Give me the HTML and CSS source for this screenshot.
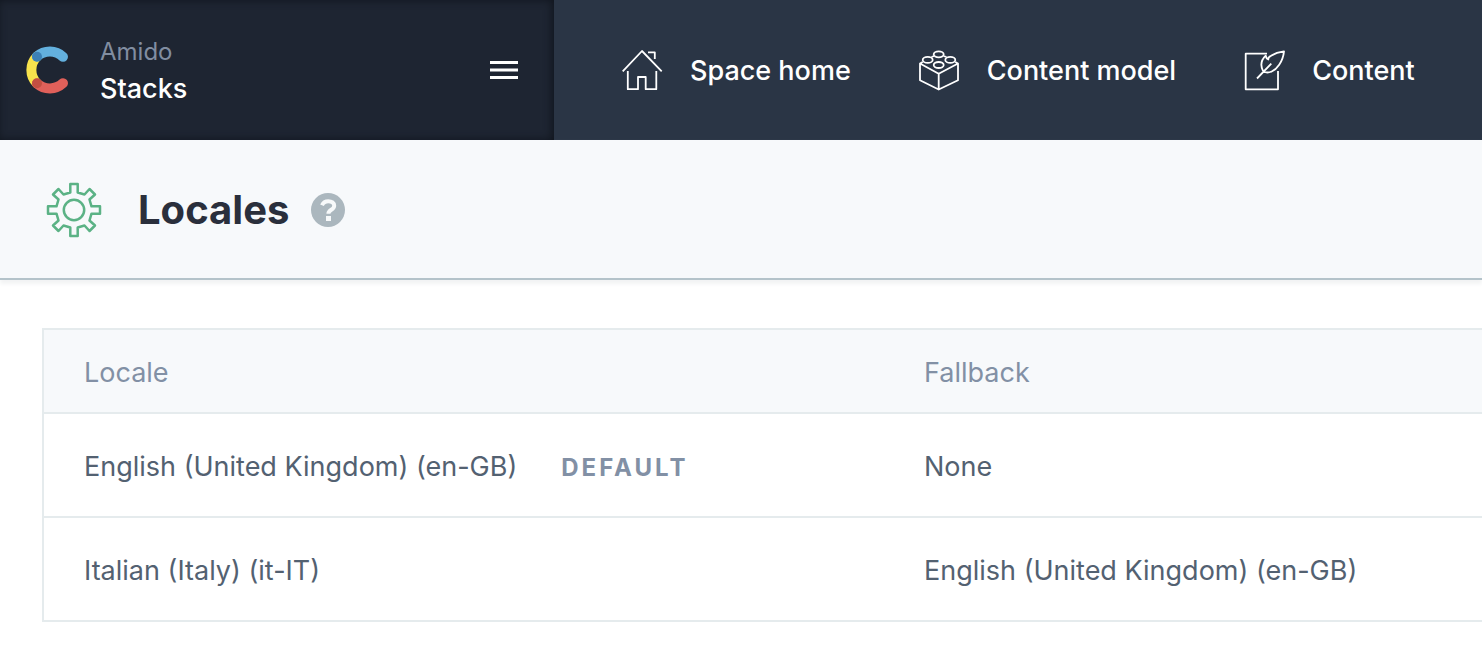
FILE: index.html
```html
<!DOCTYPE html>
<html lang="en">
<head>
<meta charset="utf-8">
<title>Locales</title>
<link rel="stylesheet" href="styles.css">
</head>
<body>
<header class="topbar">
  <div class="space">
    <svg class="logo" viewBox="0 0 44 50" aria-hidden="true" fill="none" stroke-width="10" stroke-linecap="round">
      <path d="M11 11.5A19 19 0 0 0 11 38.5" stroke="#f8e34c"/>
      <path d="M11 11.5A19.2 19.2 0 0 1 37 11.8" stroke="#63b0de"/>
      <path d="M11 38.5A19.2 19.2 0 0 0 37 38.2" stroke="#e0605a"/>
      <circle cx="11" cy="11.7" r="5" fill="#3c80b5"/>
      <circle cx="11" cy="38.3" r="5" fill="#c34f42"/>
    </svg>
    <div class="names">
      <span class="org">Amido</span>
      <span class="space-name">Stacks</span>
    </div>
    <button class="menu" type="button" aria-label="Open menu">
      <svg viewBox="0 0 28 18"><path d="M0 1.5h28M0 9h28M0 16.5h28" stroke="#fff" stroke-width="3"/></svg>
    </button>
  </div>
  <nav class="nav">
    <a class="nav-link" href="#home">
      <svg class="nav-icon" viewBox="0 0 44 44">
        <path d="M2.7 23.3 22 3l19.7 20.3M28 4.3h6.8V11M7.8 23v18.2H18V29h7.7v12.2h10.6V23"/>
      </svg>
      <span>Space home</span>
    </a>
    <a class="nav-link" href="#model">
      <svg class="nav-icon" viewBox="0 0 44 44">
        <path d="m5.700 14-2.700 1.500v16.700l18.700 9.300L41 32.200V15.500L38.300 14M3 15.500l18.700 10.200L41 15.500M21.700 25.700v15.800M14.500 9l2.500-1M29.500 9 26.500 8"/>
        <ellipse cx="21.700" cy="6.300" rx="5" ry="3"/>
        <ellipse cx="10.700" cy="11.900" rx="5" ry="3"/>
        <ellipse cx="33.300" cy="11.900" rx="5" ry="3"/>
        <ellipse cx="21.700" cy="17" rx="5" ry="3"/>
      </svg>
      <span>Content model</span>
    </a>
    <a class="nav-link" href="#content">
      <svg class="nav-icon" viewBox="0 0 44 44">
        <path d="M25 5.700H3.700v35.600H36V23"/>
        <path d="M15 30.500 29.300 15.700M21.300 23.500c-3-5.500-2.100-11.500 2.400-15.800.3 2.200 1 3.200 2.600 3.800-.2-1.700.9-3 2.700-3.700 3.500-2.300 8-3.900 13-4.500-.5 5-2.100 9.500-4.800 13.400-4.200 6.300-10.500 9.600-15.900 6.800Z"/>
      </svg>
      <span>Content</span>
    </a>
  </nav>
</header>
<main>
  <div class="heading">
    <svg class="gear" viewBox="0 0 56 56" aria-hidden="true">
      <path d="M24.300 2h7.400v8.500l6.800 2L43.500 7 49 12.500l-5.500 5 2 6.800H54v7.400h-8.500l-2 6.800 5.500 5-5.500 5.500-5-5.500-6.800 2V54h-7.400v-8.500l-6.800-2-5 5.500L7 43.500l5.500-5-2-6.800H2v-7.400h8.500l2-6.800-5.500-5L12.500 7l5 5.500 6.800-2Z"/>
      <circle cx="28" cy="28" r="10.200"/>
    </svg>
    <h1 class="title">Locales</h1>
    <button class="help" type="button" aria-label="Help">
      <svg viewBox="0 0 34 34">
        <circle cx="17" cy="17" r="17" fill="#abb7be"/>
        <path d="M11 12.300C12.200 9.500 14.500 8.200 17.300 8.200c3.500 0 5.900 1.700 5.900 4.500 0 4.300-5.800 3.800-5.800 8" fill="none" stroke="#f7f9fa" stroke-width="4"/>
        <path d="M15 23h5v5h-5z" fill="#f7f9fa"/>
      </svg>
    </button>
  </div>
  <div class="content">
    <table class="locales">
      <thead>
        <tr><th scope="col" class="locale-col">Locale</th><th scope="col">Fallback</th></tr>
      </thead>
      <tbody>
        <tr><td>English (United Kingdom) (en-GB)<span class="tag">DEFAULT</span></td><td>None</td></tr>
        <tr><td>Italian (Italy) (it-IT)</td><td>English (United Kingdom) (en-GB)</td></tr>
      </tbody>
    </table>
  </div>
</main>
</body>
</html>
```
FILE: styles.css
```css
* { box-sizing: border-box; }
body {
  margin: 0;
  background: #fff;
  color: #536171;
  font-family: Inter, "Liberation Sans", sans-serif;
  font-size: 27px;
  overflow-x: hidden;
}
svg { display: block; }
button { padding: 0; border: 0; background: none; cursor: pointer; }
.topbar { display: flex; height: 140px; background: #2a3545; }
.space {
  display: flex;
  align-items: center;
  flex: 0 0 554px;
  padding: 0 36px 0 26px;
  background: #1e2532;
  box-shadow: inset -2px 0 8px #10151e;
}
.logo { width: 44px; height: 50px; }
.names { display: flex; flex-direction: column; flex: 1; gap: 1px; margin-left: 30px; }
.org { color: #818da1; font-size: 24px; line-height: 36px; }
.space-name { color: #fff; font-size: 27px; font-weight: 500; line-height: 36px; }
.menu svg { width: 28px; height: 18px; }
.nav { display: flex; align-items: center; gap: 66px; padding-left: 66px; }
.nav-link {
  display: flex;
  align-items: center;
  gap: 26px;
  color: #fff;
  font-weight: 500;
  text-decoration: none;
  white-space: nowrap;
}
.nav-icon {
  width: 44px;
  height: 44px;
  fill: none;
  stroke: #fff;
  stroke-width: 1.800;
  stroke-linejoin: round;
}
.heading {
  display: flex;
  align-items: center;
  height: 140px;
  padding: 2px 0 0 46px;
  background: #f7f9fb;
  border-bottom: 2px solid #b4c3ca;
  box-shadow: 0 4px 4px #f2f3f4;
}
.gear { width: 56px; height: 56px; fill: none; stroke: #5bb285; stroke-width: 2.500; stroke-linejoin: round; }
.title { margin: 0 22px 0 36px; color: #2a2f3c; font-size: 40px; line-height: 48px; font-weight: 700; }
.help svg { width: 34px; height: 34px; }
.content { padding: 48px 0 30px 42px; }
.locales {
  width: 100%;
  table-layout: fixed;
  border-collapse: separate;
  border-spacing: 0;
  border: solid #e5ebed;
  border-width: 2px 0 0 2px;
}
.locales th, .locales td {
  padding: 2px 0 0 40px;
  border-bottom: 2px solid #e5ebed;
  text-align: left;
  font-weight: 400;
  white-space: nowrap;
}
.locales th { height: 84px; background: #f7f9fb; color: #8290a5; }
.locales td { height: 104px; }
.locale-col { width: 840px; }
.locales .tag { margin-left: 44px; color: #8290a5; font-size: 24px; font-weight: 700; letter-spacing: 3px; }
```
